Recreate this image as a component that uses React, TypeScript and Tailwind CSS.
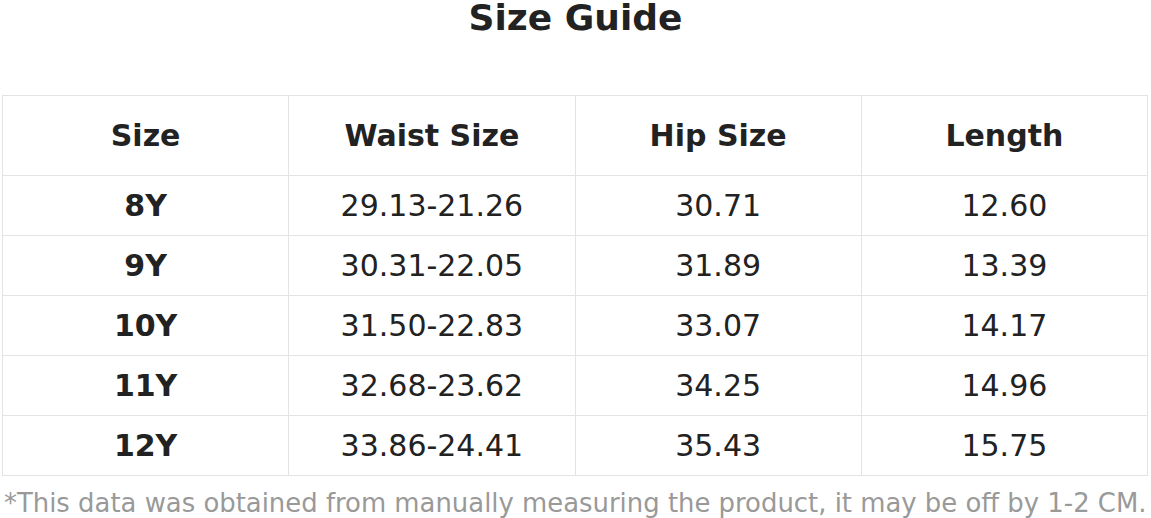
import React from "react";

const rows = [
  ["8Y", "29.13-21.26", "30.71", "12.60"],
  ["9Y", "30.31-22.05", "31.89", "13.39"],
  ["10Y", "31.50-22.83", "33.07", "14.17"],
  ["11Y", "32.68-23.62", "34.25", "14.96"],
  ["12Y", "33.86-24.41", "35.43", "15.75"],
];

const headers = ["Size", "Waist Size", "Hip Size", "Length"];

const App: React.FC = () => {
  return (
    <div className="w-[1151px] h-[518px] bg-white text-[#222] font-['DejaVu_Sans',sans-serif] overflow-hidden">
      {/* Title */}
      <h1 className="h-[36px] text-center text-[36px] font-bold leading-[36px]">
        Size Guide
      </h1>

      {/* Table */}
      <table className="mt-[59px] ml-[2px] w-[1146px] border-collapse table-fixed">
        <thead>
          <tr className="h-[80px]">
            {headers.map((h) => (
              <th key={h} className="border border-[#e3e3e3] text-[30px] font-bold text-center">
                {h}
              </th>
            ))}
          </tr>
        </thead>
        <tbody>
          {rows.map((r) => (
            <tr key={r[0]} className="h-[60px]">
              {r.map((c, i) => (
                <td
                  key={i}
                  className={`border border-[#e3e3e3] text-[30px] text-center ${i === 0 ? "font-bold" : "font-normal"}`}
                >
                  {c}
                </td>
              ))}
            </tr>
          ))}
        </tbody>
      </table>

      {/* Footnote */}
      <p className="mt-[11px] pl-[4px] text-[25.9px] text-[#999] whitespace-nowrap leading-[32px]">
        *This data was obtained from manually measuring the product, it may be off by 1-2 CM.
      </p>
    </div>
  );
};

export default App;
